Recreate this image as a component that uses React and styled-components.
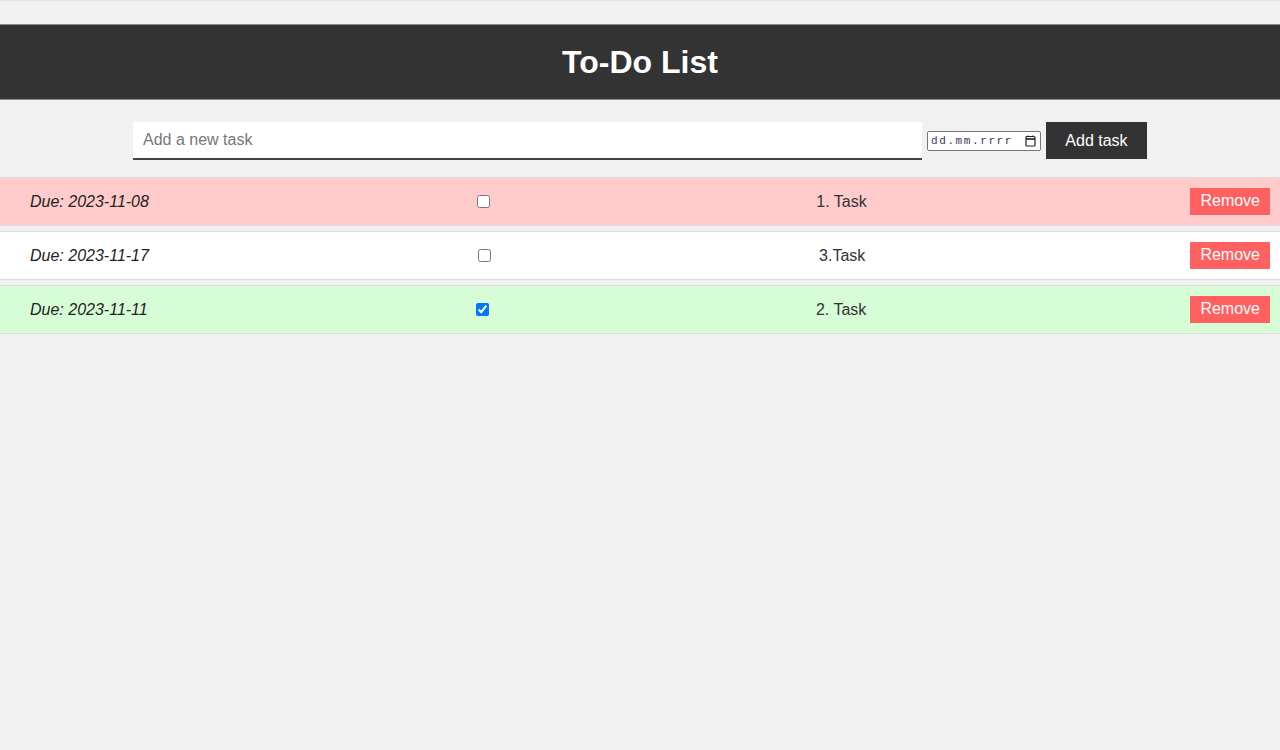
import React, { useState } from 'react'
import styled, { createGlobalStyle } from 'styled-components'

const GlobalStyle = createGlobalStyle`
  html, body {
    margin: 0;
    padding: 0;
    background: #f1f1f1;
    font-family: 'Liberation Sans', Arial, sans-serif;
  }
`

const initialTasks = [
  { id: 1, due: '2023-11-08', text: '1. Task', done: false, tone: 'overdue' },
  { id: 3, due: '2023-11-17', text: '3.Task', done: false, tone: 'normal' },
  { id: 2, due: '2023-11-11', text: '2. Task', done: true, tone: 'done' },
]

const tones = {
  overdue: '#ffcbcb',
  normal: '#ffffff',
  done: '#d7fdd6',
}

const App = () => {
  const [tasks, setTasks] = useState(initialTasks)
  const [text, setText] = useState('')

  const toggle = (id) =>
    setTasks((list) => list.map((t) => (t.id === id ? { ...t, done: !t.done } : t)))

  const remove = (id) => setTasks((list) => list.filter((t) => t.id !== id))

  return (
    <Page>
      <GlobalStyle />
      <Header>
        <Title>To-Do List</Title>
      </Header>
      <Form onSubmit={(e) => e.preventDefault()}>
        <TaskInput
          placeholder='Add a new task'
          value={text}
          onChange={(e) => setText(e.target.value)}
        />
        <DateBox>
          <DateText placeholder='dd.mm.rrrr' />
          <svg width='11' height='12' viewBox='0 0 11 12' fill='none'>
            <rect x='1' y='1.5' width='9' height='9.5' rx='1' stroke='#222' strokeWidth='1.2' />
            <line x1='1' y1='4' x2='10' y2='4' stroke='#222' strokeWidth='1.6' />
            <line x1='3' y1='0.5' x2='3' y2='2' stroke='#222' strokeWidth='1.2' />
            <line x1='8' y1='0.5' x2='8' y2='2' stroke='#222' strokeWidth='1.2' />
          </svg>
        </DateBox>
        <AddButton type='submit'>Add task</AddButton>
      </Form>
      <List>
        {tasks.map((task) => (
          <Row key={task.id} tone={task.done ? 'done' : task.tone}>
            <Due>Due: {task.due}</Due>
            <input type='checkbox' checked={task.done} onChange={() => toggle(task.id)} />
            <TaskText>{task.text}</TaskText>
            <RemoveButton onClick={() => remove(task.id)}>Remove</RemoveButton>
          </Row>
        ))}
      </List>
    </Page>
  )
}

const Page = styled.main`
  min-height: 750px;
  padding-top: 23px;
  box-sizing: border-box;
  border-top: 1px solid #e4e4e4;
`

const Header = styled.header`
  background: #333;
  padding: 19px 0 18px;
  text-align: center;
  border-top: 1px solid #8a8a8a;
  border-bottom: 1px solid #8a8a8a;
`

const Title = styled.h1`
  margin: 0;
  color: #fff;
  font-size: 32px;
  line-height: 37px;
  font-weight: bold;
`

const Form = styled.form`
  display: flex;
  justify-content: center;
  align-items: flex-start;
  gap: 5px;
  margin: 22px 0 17px;
`

const TaskInput = styled.input`
  width: 789px;
  height: 38px;
  box-sizing: border-box;
  border: none;
  border-bottom: 2px solid #444;
  background: #fff;
  padding: 0 10px;
  font-family: inherit;
  font-size: 16px;
  color: #222;
  outline: none;
  &::placeholder {
    color: #777;
  }
`

const DateBox = styled.label`
  display: flex;
  align-items: center;
  width: 114px;
  height: 20px;
  box-sizing: border-box;
  margin-top: 9px;
  border: 1px solid #767676;
  border-radius: 2px;
  background: #fff;
  padding: 0 4px 0 3px;
`

const DateText = styled.input`
  flex: 1;
  min-width: 0;
  border: none;
  outline: none;
  padding: 0;
  background: transparent;
  font-family: 'Liberation Mono', 'DejaVu Sans Mono', monospace;
  font-size: 11px;
  letter-spacing: 1.6px;
  &::placeholder {
    color: #3a3560;
  }
`

const AddButton = styled.button`
  height: 37px;
  width: 101px;
  border: none;
  background: #333;
  color: #fff;
  font-family: inherit;
  font-size: 16px;
  cursor: pointer;
`

const List = styled.ul`
  list-style: none;
  margin: 0;
  padding: 0;
`

const Row = styled.li`
  display: flex;
  justify-content: space-between;
  align-items: center;
  padding: 10px 10px 10px 30px;
  margin-bottom: 5px;
  background: ${(p) => tones[p.tone]};
  border-top: 1px solid #dcdcdc;
  border-bottom: 1px solid #dcdcdc;
  input {
    margin: 3px 3px 3px 4px;
  }
`

const Due = styled.span`
  font-style: italic;
  font-size: 16px;
  color: #222;
`

const TaskText = styled.span`
  font-size: 16px;
  color: #333;
`

const RemoveButton = styled.button`
  border: none;
  background: #ff6161;
  color: #fff;
  font-family: inherit;
  font-size: 16px;
  padding: 4px 10px 5px;
  cursor: pointer;
`

export default App
